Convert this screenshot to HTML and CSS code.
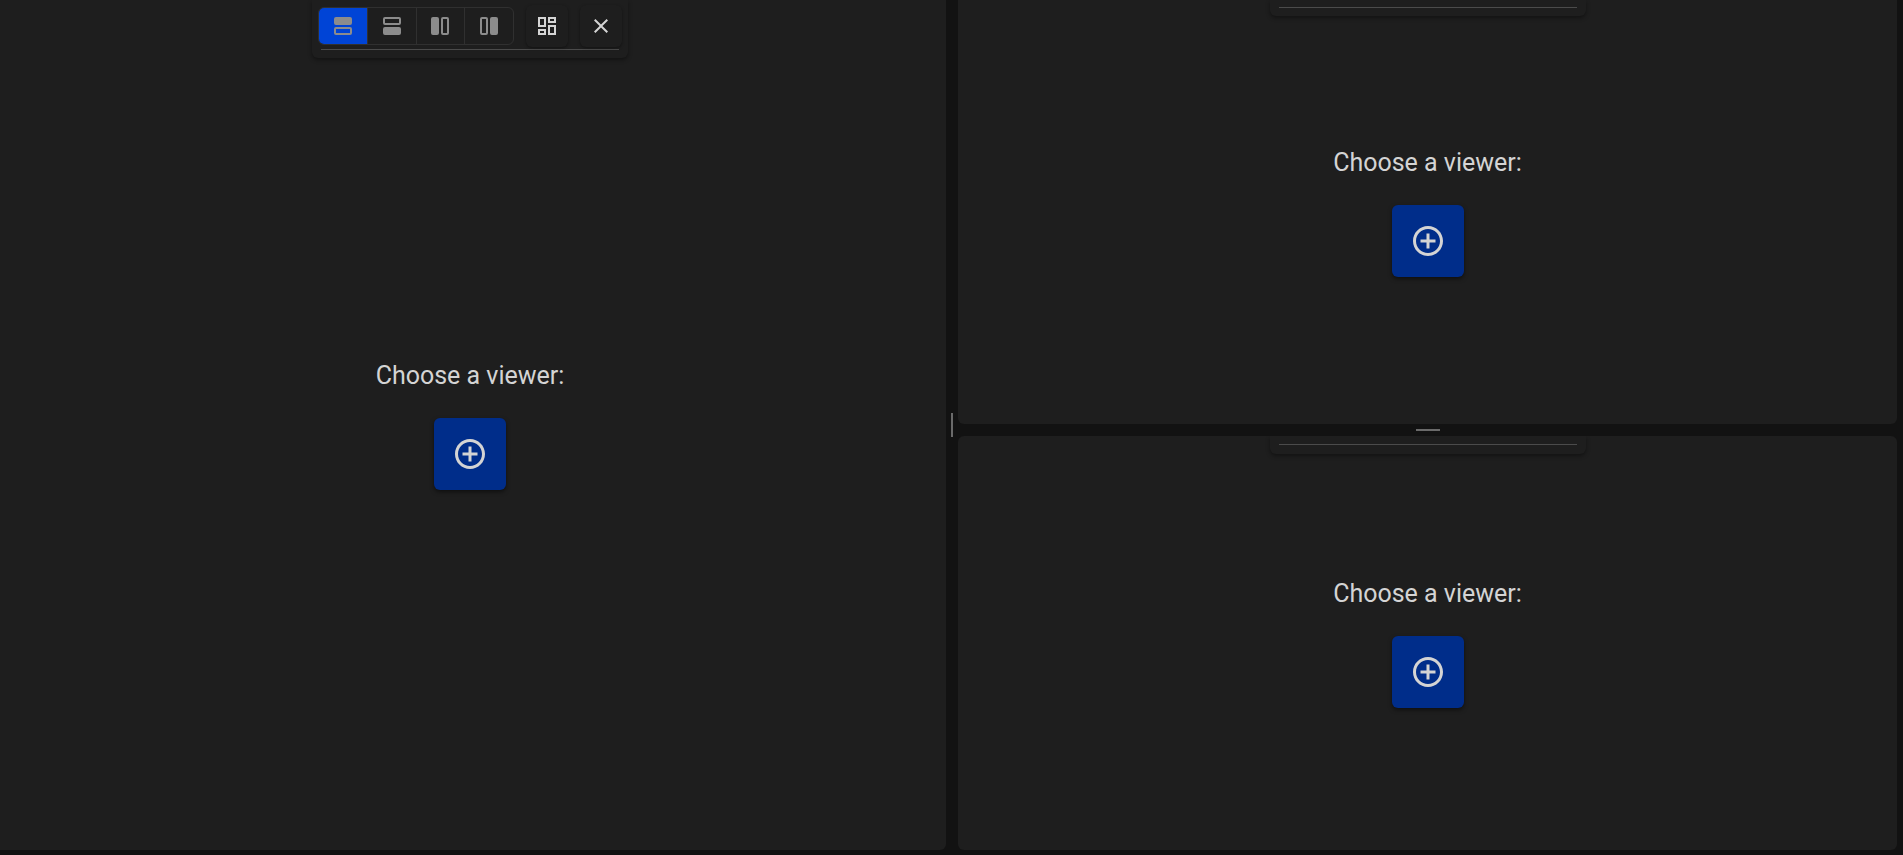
FILE: index.html
```html
<!DOCTYPE html>
<html lang="en">
<head>
<meta charset="utf-8">
<title>Viewer layout</title>
<link rel="stylesheet" href="styles.css">
</head>
<body>
<svg class="defs" aria-hidden="true">
  <symbol id="plus" viewBox="0 0 24 24"><path d="M13 7h-2v4H7v2h4v4h2v-4h4v-2h-4V7zm-1-5C6.480 2 2 6.480 2 12s4.480 10 10 10 10-4.480 10-10S17.520 2 12 2zm0 18c-4.410 0-8-3.590-8-8s3.590-8 8-8 8 3.590 8 8-3.590 8-8 8z"/></symbol>
  <symbol id="split" viewBox="0 0 24 24"><path fill-rule="evenodd" d="M5 3h14a2 2 0 0 1 2 2v4a2 2 0 0 1-2 2H5a2 2 0 0 1-2-2V5a2 2 0 0 1 2-2zM5 13h14a2 2 0 0 1 2 2v4a2 2 0 0 1-2 2H5a2 2 0 0 1-2-2v-4a2 2 0 0 1 2-2zM5 15v4h14v-4z"/></symbol>
</svg>
<main class="workspace">
  <section class="panel panel-tall">
    <div class="toolbar">
      <div class="tools">
        <div class="toggle-group" role="group" aria-label="Split">
          <button class="toggle active" aria-label="Split above" aria-pressed="true"><svg class="icon"><use href="#split"/></svg></button>
          <button class="toggle" aria-label="Split below" aria-pressed="false"><svg class="icon turn-180"><use href="#split"/></svg></button>
          <button class="toggle" aria-label="Split left" aria-pressed="false"><svg class="icon turn-270"><use href="#split"/></svg></button>
          <button class="toggle" aria-label="Split right" aria-pressed="false"><svg class="icon turn-90"><use href="#split"/></svg></button>
        </div>
        <button class="tool" aria-label="Choose viewer"><svg class="icon" viewBox="0 0 24 24"><path d="M19 5v2h-4V5h4M9 5v6H5V5h4m10 8v6h-4v-6h4M9 17v2H5v-2h4M21 3h-8v6h8V3zM11 3H3v10h8V3zm10 8h-8v10h8V11zm-10 4H3v6h8v-6z"/></svg></button>
        <button class="tool" aria-label="Close"><svg class="icon" viewBox="0 0 24 24"><path d="M19 6.410 17.590 5 12 10.590 6.410 5 5 6.410 10.590 12 5 17.590 6.410 19 12 13.410 17.590 19 19 17.590 13.410 12z"/></svg></button>
      </div>
      <hr class="rule">
    </div>
    <div class="chooser">
      <h2 class="title">Choose a viewer:</h2>
      <button class="add" aria-label="Add viewer"><svg class="add-icon"><use href="#plus"/></svg></button>
    </div>
  </section>
  <div class="gutter" role="separator" aria-orientation="vertical"><span class="grip"></span></div>
  <div class="stack">
    <section class="panel panel-top">
      <div class="toolbar collapsed"><hr class="rule"></div>
      <div class="chooser">
        <h2 class="title">Choose a viewer:</h2>
        <button class="add" aria-label="Add viewer"><svg class="add-icon"><use href="#plus"/></svg></button>
      </div>
    </section>
    <div class="gutter" role="separator" aria-orientation="horizontal"><span class="grip grip-row"></span></div>
    <section class="panel">
      <div class="toolbar collapsed"><hr class="rule"></div>
      <div class="chooser">
        <h2 class="title">Choose a viewer:</h2>
        <button class="add" aria-label="Add viewer"><svg class="add-icon"><use href="#plus"/></svg></button>
      </div>
    </section>
  </div>
</main>
</body>
</html>
```
FILE: styles.css
```css
* { box-sizing: border-box; }

body {
  margin: 0;
  background: #121212;
  color: #d4d4d4;
  font-family: Roboto, "Liberation Sans", sans-serif;
}

button {
  padding: 0;
  border: 0;
  color: inherit;
  font: inherit;
  cursor: pointer;
}

.defs {
  position: absolute;
  width: 0;
  height: 0;
}

.workspace {
  display: grid;
  grid-template-columns: minmax(0, 73fr) 12px minmax(0, 72fr);
  height: 100vh;
  margin-left: -6px;
  padding: 0 6px 5px 0;
}

.stack {
  display: grid;
  grid-template-rows: minmax(0, 212fr) 12px minmax(0, 207fr);
}

.panel {
  position: relative;
  display: grid;
  place-items: center;
  border-radius: 6px;
  background: #1e1e1e;
  overflow: hidden;
}

.panel-tall,
.panel-top {
  border-top-left-radius: 0;
  border-top-right-radius: 0;
}

.gutter {
  display: grid;
  place-items: center;
}

.grip {
  width: 2px;
  height: 24px;
  background: #6a6a6a;
}

.grip-row {
  width: 24px;
  height: 2px;
}

.toolbar {
  position: absolute;
  top: 0;
  left: 50%;
  width: 316px;
  padding: 5px 6px 8px;
  transform: translateX(-50%);
  border-radius: 0 0 6px 6px;
  background: #1e1e1e;
  box-shadow: 0 2px 4px rgba(0, 0, 0, 0.4);
}

.collapsed { padding: 8px 6px 9px; }

.panel-top .collapsed { padding: 7px 6px 8px; }

.tools {
  display: flex;
  align-items: center;
  gap: 12px;
  margin-bottom: 2px;
}

.toggle-group {
  display: flex;
  flex: 1;
  height: 38px;
  border: 1px solid #303030;
  border-radius: 6px;
  overflow: hidden;
}

.toggle {
  display: grid;
  place-items: center;
  flex: 1;
  background: transparent;
  color: #8c8c8c;
}

.toggle + .toggle { border-left: 1px solid #303030; }

.toggle.active { background: #0044d6; }

.icon {
  width: 24px;
  height: 24px;
  fill: currentColor;
}

.turn-90 { transform: rotate(90deg); }
.turn-180 { transform: rotate(180deg); }
.turn-270 { transform: rotate(270deg); }

.tool {
  display: grid;
  place-items: center;
  width: 42px;
  height: 42px;
  border-radius: 6px;
  background: #1e1e1e;
  box-shadow: 0 1px 3px rgba(0, 0, 0, 0.4);
}

.rule {
  height: 1px;
  margin: 0 3px;
  border: 0;
  background: #4b4b4b;
}

.chooser {
  display: flex;
  flex-direction: column;
  align-items: center;
  gap: 26px;
}

.title {
  margin: 0;
  font-size: 25px;
  font-weight: 400;
  line-height: 32px;
}

.add {
  display: grid;
  place-items: center;
  width: 72px;
  height: 72px;
  border-radius: 6px;
  background: #002d8a;
  box-shadow: 0 2px 4px rgba(0, 0, 0, 0.5);
}

.add-icon {
  width: 36px;
  height: 36px;
  fill: currentColor;
}
```
